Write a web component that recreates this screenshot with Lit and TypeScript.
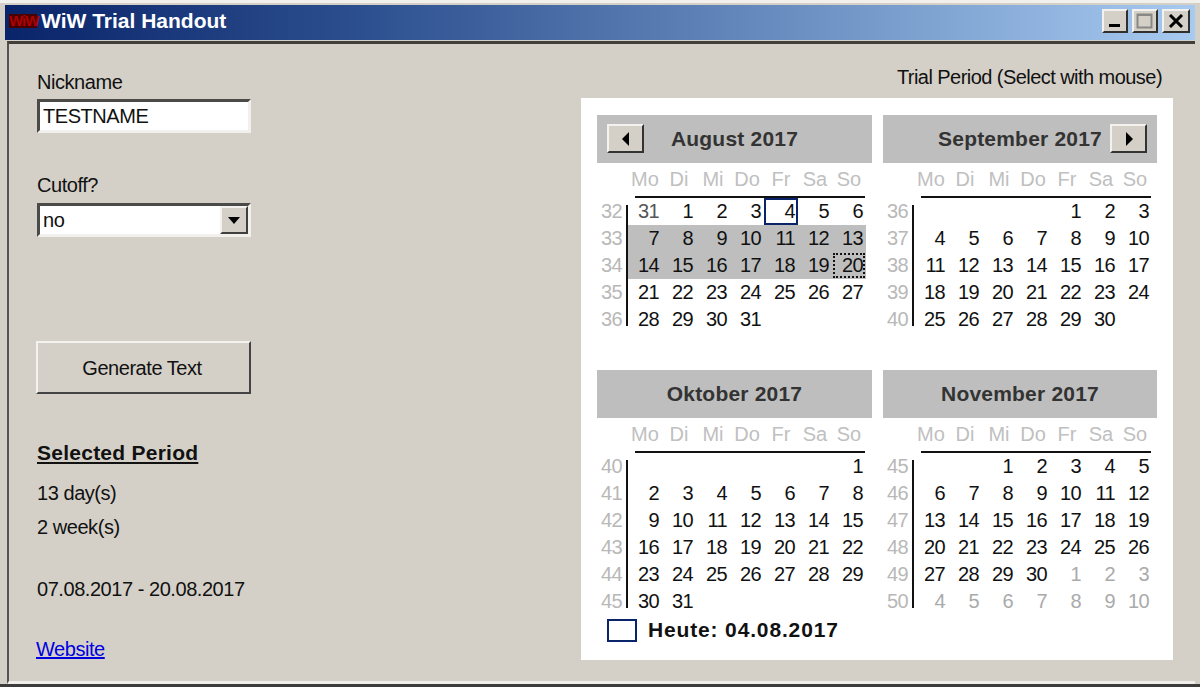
import { LitElement, html, css, nothing } from 'lit';
import { customElement } from 'lit/decorators.js';
import { classMap } from 'lit/directives/class-map.js';

interface Month {
  title: string;
  nav?: 'prev' | 'next';
  firstWeek: number;
  lead: number; // empty cells before the first day
  days: number;
  before?: number[]; // greyed days of the previous month
  after?: number[]; // greyed days of the next month
}

const WEEKDAYS = ['Mo', 'Di', 'Mi', 'Do', 'Fr', 'Sa', 'So'];

const MONTHS: Month[] = [
  { title: 'August 2017', nav: 'prev', firstWeek: 32, lead: 0, days: 31, before: [31] },
  { title: 'September 2017', nav: 'next', firstWeek: 36, lead: 4, days: 30 },
  { title: 'Oktober 2017', firstWeek: 40, lead: 6, days: 31 },
  {
    title: 'November 2017',
    firstWeek: 45,
    lead: 2,
    days: 30,
    after: [1, 2, 3, 4, 5, 6, 7, 8, 9, 10],
  },
];

@customElement('app-root')
export class AppRoot extends LitElement {
  static styles = css`
    :host {
      display: block;
      width: 1200px;
      height: 687px;
      overflow: hidden;
      font-family: 'Liberation Sans', Arial, sans-serif;
      color: #111;
    }

    .window {
      box-sizing: border-box;
      width: 1200px;
      height: 687px;
      display: flex;
      flex-direction: column;
      background: #d4d0c8;
      border-top: 3px solid #f2f0ec;
      border-bottom: 3px solid #3c3c3c;
      padding: 2px 5px 0;
    }

    .titlebar {
      flex: none;
      box-sizing: border-box;
      height: 35px;
      display: flex;
      align-items: center;
      padding: 0 0 3px 4px;
      background: linear-gradient(90deg, #0a246a 0%, #2c4f8f 30%, #a6caf0 100%);
    }

    .logo {
      width: 28px;
      margin-right: 4px;
      background: #4a0000;
      color: #b00000;
      font-size: 15px;
      font-weight: 700;
      line-height: 14px;
      text-align: center;
      letter-spacing: -1px;
    }

    .caption {
      color: #fff;
      font-size: 21px;
      font-weight: 700;
    }

    .controls {
      margin-left: auto;
      margin-right: 5px;
      display: flex;
    }

    .ctl {
      box-sizing: border-box;
      width: 26px;
      height: 24px;
      margin-left: 4px;
      display: flex;
      align-items: center;
      justify-content: center;
      background: #d4d0c8;
      border: 2px solid;
      border-color: #f4f2ee #30302e #30302e #f4f2ee;
    }

    .ctl.close {
      width: 28px;
    }

    .client {
      flex: 1;
      min-height: 0;
      display: flex;
      margin: 1px 0 0 2px;
      border-top: 3px solid #403f3c;
      border-left: 2px solid #55534f;
      border-bottom: 3px solid #f0eeea;
    }

    .left {
      width: 244px;
      flex: none;
      box-sizing: border-box;
      padding: 26px 0 0 28px;
      display: flex;
      flex-direction: column;
      align-items: flex-start;
      font-size: 20px;
      letter-spacing: -0.45px;
      line-height: 24px;
      white-space: nowrap;
    }

    .field-label {
      height: 24px;
    }

    .sunken {
      box-sizing: border-box;
      width: 214px;
      height: 34px;
      margin-top: 5px;
      background: #fff;
      border: 3px solid;
      border-color: #4a4a48 #f2f0ec #f2f0ec #4a4a48;
      font: inherit;
      letter-spacing: inherit;
      color: #111;
      padding: 0 3px;
      outline: none;
    }

    .cutoff {
      margin-top: 40px;
    }

    .select {
      display: flex;
      align-items: center;
      justify-content: space-between;
      padding-right: 0;
      margin-top: 6px;
    }

    .arrow {
      box-sizing: border-box;
      width: 28px;
      height: 28px;
      display: flex;
      align-items: center;
      justify-content: center;
      background: #d4d0c8;
      border: 2px solid;
      border-color: #f4f2ee #403f3c #403f3c #f4f2ee;
    }

    .generate {
      box-sizing: border-box;
      width: 215px;
      height: 53px;
      margin: 104px 0 0 -1px;
      background: #d4d0c8;
      border: 2px solid;
      border-color: #f4f2ee #444 #444 #f4f2ee;
      font: inherit;
      letter-spacing: inherit;
      color: #111;
      padding: 0 3px 0 0;
    }

    .heading {
      margin-top: 47px;
      font-size: 21px;
      font-weight: 700;
      letter-spacing: 0.25px;
      text-decoration: underline;
    }

    .days {
      margin-top: 16px;
    }

    .weeks {
      margin-top: 10px;
    }

    .range {
      margin-top: 38px;
    }

    .site {
      margin-top: 36px;
      margin-left: -1px;
      color: #0000e0;
      text-decoration: underline;
    }

    .right {
      flex: 1;
      display: flex;
      flex-direction: column;
      align-items: flex-end;
      padding-right: 22px;
    }

    .hint {
      margin: 21px 11px 9px 0;
      font-size: 20px;
      letter-spacing: -0.55px;
      line-height: 24px;
    }

    .panel {
      box-sizing: border-box;
      width: 592px;
      height: 562px;
      background: #fff;
      padding: 17px 16px 0;
    }

    .months {
      display: grid;
      grid-template-columns: 275px 274px;
      grid-template-rows: 255px auto;
      column-gap: 11px;
    }

    .head {
      position: relative;
      height: 48px;
      display: flex;
      align-items: center;
      justify-content: center;
      background: #bebebe;
      color: #333;
      font-size: 21px;
      font-weight: 700;
      letter-spacing: 0.2px;
    }

    .nav {
      position: absolute;
      top: 9px;
      box-sizing: border-box;
      width: 37px;
      height: 29px;
      display: flex;
      align-items: center;
      justify-content: center;
      background: #d4d0c8;
      border: 2px solid;
      border-color: #f4f2ee #333 #333 #f4f2ee;
    }

    .nav.prev {
      left: 10px;
    }

    .nav.next {
      right: 10px;
    }

    .weekdays {
      display: grid;
      grid-template-columns: repeat(7, 34px);
      height: 33px;
      margin-left: 31px;
      align-items: center;
      color: #c0c0c0;
      font-size: 20px;
      text-align: center;
    }

    .rule {
      height: 2px;
      width: 230px;
      margin-left: 38px;
      background: #111;
    }

    .body {
      display: flex;
    }

    .wk {
      width: 29px;
      margin-right: -3px;
      color: #b8b8b8;
      text-align: right;
      font-size: 20px;
      letter-spacing: -0.6px;
    }

    .wk div {
      height: 27px;
      line-height: 27px;
      padding-right: 4px;
    }

    .rail {
      width: 2px;
      margin: 7px 0 7px 3px;
      background: #111;
    }

    .grid {
      display: grid;
      grid-template-columns: repeat(7, 34px);
      grid-auto-rows: 27px;
      font-size: 20px;
      letter-spacing: -0.6px;
    }

    .day {
      box-sizing: border-box;
      line-height: 27px;
      text-align: right;
      padding-right: 3px;
    }

    .day.sel {
      background: #bebebe;
    }

    .day.dim {
      color: #aaa;
    }

    .day.before {
      color: #555;
    }

    .day.today {
      border: 2px solid #0a246a;
      line-height: 23px;
      padding-right: 1px;
    }

    .day.end {
      outline: 2px dotted #111;
      outline-offset: -3px;
    }

    .footer {
      grid-column: 1 / 3;
      display: flex;
      align-items: center;
      margin-top: 3px;
      padding-left: 10px;
      font-size: 21px;
      font-weight: 700;
      letter-spacing: 0.85px;
      color: #111;
    }

    .swatch {
      box-sizing: border-box;
      width: 30px;
      height: 23px;
      margin-right: 11px;
      border: 2px solid #0a246a;
    }
  `;

  private _renderMonth(m: Month, index: number) {
    const cells: unknown[] = [];
    for (let i = 0; i < m.lead; i++) cells.push(html`<div></div>`);
    (m.before ?? []).forEach((d) => cells.push(html`<div class="day before">${d}</div>`));
    for (let d = 1; d <= m.days; d++) {
      const inAugust = index === 0;
      cells.push(html`<div
        class=${classMap({
          day: true,
          sel: inAugust && d >= 7 && d <= 20,
          today: inAugust && d === 4,
          end: inAugust && d === 20,
        })}
      >
        ${d}
      </div>`);
    }
    (m.after ?? []).forEach((d) => cells.push(html`<div class="day dim">${d}</div>`));

    const rows = Math.ceil(cells.length / 7);
    const weeks = Array.from({ length: rows }, (_, i) => m.firstWeek + i);

    return html`
      <div class="month">
        <div class="head">
          ${m.nav === 'prev'
            ? html`<div class="nav prev">
                <svg width="8" height="14" viewBox="0 0 8 14"><path d="M7 0v14L0 7z" fill="#000" /></svg>
              </div>`
            : nothing}
          ${m.title}
          ${m.nav === 'next'
            ? html`<div class="nav next">
                <svg width="8" height="14" viewBox="0 0 8 14"><path d="M1 0v14l7-7z" fill="#000" /></svg>
              </div>`
            : nothing}
        </div>
        <div class="weekdays">${WEEKDAYS.map((w) => html`<div>${w}</div>`)}</div>
        <div class="rule"></div>
        <div class="body">
          <div class="wk">${weeks.map((w) => html`<div>${w}</div>`)}</div>
          <div class="rail"></div>
          <div class="grid">${cells}</div>
        </div>
      </div>
    `;
  }

  render() {
    return html`
      <div class="window">
        <div class="titlebar">
          <span class="logo">WiW</span>
          <span class="caption">WiW Trial Handout</span>
          <div class="controls">
            <div class="ctl">
              <svg width="14" height="14" viewBox="0 0 14 14"><rect x="1" y="10" width="11" height="3" fill="#000" /></svg>
            </div>
            <div class="ctl">
              <svg width="18" height="16" viewBox="0 0 18 16">
                <rect x="1.5" y="1.5" width="14" height="13" fill="none" stroke="#8a8884" stroke-width="2" />
                <rect x="2" y="1" width="13" height="2" fill="#8a8884" />
              </svg>
            </div>
            <div class="ctl close">
              <svg width="16" height="14" viewBox="0 0 16 14">
                <path d="M2 1l12 12M14 1L2 13" stroke="#000" stroke-width="3" fill="none" />
              </svg>
            </div>
          </div>
        </div>
        <div class="client">
          <div class="left">
            <div class="field-label">Nickname</div>
            <input class="sunken" .value=${'TESTNAME'} />
            <div class="field-label cutoff">Cutoff?</div>
            <div class="sunken select">
              <span>no</span>
              <span class="arrow">
                <svg width="12" height="7" viewBox="0 0 12 7"><path d="M0 0h12L6 7z" fill="#000" /></svg>
              </span>
            </div>
            <button class="generate">Generate Text</button>
            <div class="heading">Selected Period</div>
            <div class="days">13 day(s)</div>
            <div class="weeks">2 week(s)</div>
            <div class="range">07.08.2017 - 20.08.2017</div>
            <div class="site">Website</div>
          </div>
          <div class="right">
            <div class="hint">Trial Period (Select with mouse)</div>
            <div class="panel">
              <div class="months">
                ${MONTHS.map((m, i) => this._renderMonth(m, i))}
                <div class="footer">
                  <span class="swatch"></span>
                  Heute: 04.08.2017
                </div>
              </div>
            </div>
          </div>
        </div>
      </div>
    `;
  }
}

declare global {
  interface HTMLElementTagNameMap {
    'app-root': AppRoot;
  }
}
